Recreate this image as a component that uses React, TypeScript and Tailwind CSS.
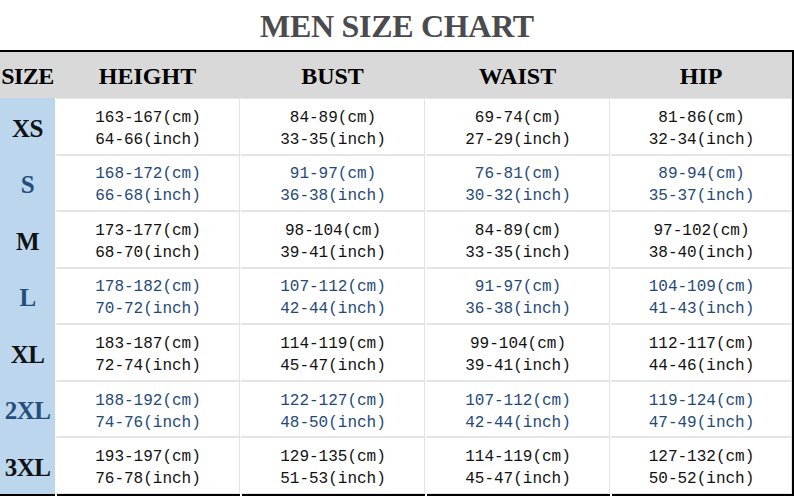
const rows = [
  { size: "XS", blue: false, h: ["163-167", "64-66"], b: ["84-89", "33-35"], w: ["69-74", "27-29"], p: ["81-86", "32-34"] },
  { size: "S", blue: true, h: ["168-172", "66-68"], b: ["91-97", "36-38"], w: ["76-81", "30-32"], p: ["89-94", "35-37"] },
  { size: "M", blue: false, h: ["173-177", "68-70"], b: ["98-104", "39-41"], w: ["84-89", "33-35"], p: ["97-102", "38-40"] },
  { size: "L", blue: true, h: ["178-182", "70-72"], b: ["107-112", "42-44"], w: ["91-97", "36-38"], p: ["104-109", "41-43"] },
  { size: "XL", blue: false, h: ["183-187", "72-74"], b: ["114-119", "45-47"], w: ["99-104", "39-41"], p: ["112-117", "44-46"] },
  { size: "2XL", blue: true, h: ["188-192", "74-76"], b: ["122-127", "48-50"], w: ["107-112", "42-44"], p: ["119-124", "47-49"] },
  { size: "3XL", blue: false, h: ["193-197", "76-78"], b: ["129-135", "51-53"], w: ["114-119", "45-47"], p: ["127-132", "50-52"] },
];

const widths = ["w-[185px]", "w-[185px]", "w-[185px]", "w-[182px]"];

function Cell({ v, blue, width }: { v: string[]; blue: boolean; width: string }) {
  return (
    <div
      className={`${width} h-full flex flex-col items-center justify-center pt-[5px] border border-[#e4e4e4] border-l-[2px] border-l-white text-[16px] leading-[22px] ${
        blue ? "text-[#1f4a78]" : "text-[#111]"
      }`}
      style={{ fontFamily: '"Liberation Mono", monospace' }}
    >
      <span>{v[0]}(cm)</span>
      <span>{v[1]}(inch)</span>
    </div>
  );
}

export default function App() {
  const serif = { fontFamily: '"Liberation Serif", "Times New Roman", serif' };
  return (
    <div className="w-[794px] h-[496px] bg-white overflow-hidden" style={serif}>
      <div className="h-[50px] flex items-center justify-center">
        <h1 className="text-[32px] font-bold text-[#4b4b4d] tracking-[-0.3px] pt-[2px]">MEN SIZE CHART</h1>
      </div>

      <div className="w-[794px] border-t-2 border-r-2 border-black">
        {/* header */}
        <div className="h-[46px] flex bg-[#d9d9d9] text-black font-bold text-[24px] pt-[2px]">
          <div className="w-[55px] flex items-center justify-center tracking-[-0.5px]">SIZE</div>
          {["HEIGHT", "BUST", "WAIST", "HIP"].map((t, i) => (
            <div key={t} className={`${widths[i]} flex items-center justify-center`}>
              {t}
            </div>
          ))}
        </div>

        {/* body */}
        <div className="h-[396px] grid grid-rows-7">
          {rows.map((r) => (
            <div key={r.size} className="flex min-h-0">
              <div
                className={`w-[55px] bg-[#bcd6ee] flex items-center justify-center font-bold text-[25px] pt-[4px] tracking-[-0.5px] ${
                  r.blue ? "text-[#234e7b]" : "text-[#111]"
                }`}
              >
                {r.size}
              </div>
              <Cell v={r.h} blue={r.blue} width={widths[0]} />
              <Cell v={r.b} blue={r.blue} width={widths[1]} />
              <Cell v={r.w} blue={r.blue} width={widths[2]} />
              <Cell v={r.p} blue={r.blue} width={widths[3]} />
            </div>
          ))}
        </div>
        <div className="h-[2px] flex">
          <div className="w-[55px] bg-black" />
          <div className="w-[2px] bg-white" />
          <div className="w-[183px] bg-black" />
          <div className="w-[2px] bg-white" />
          <div className="w-[183px] bg-black" />
          <div className="w-[2px] bg-white" />
          <div className="w-[183px] bg-black" />
          <div className="w-[2px] bg-white" />
          <div className="w-[180px] bg-black" />
        </div>
      </div>
    </div>
  );
}
